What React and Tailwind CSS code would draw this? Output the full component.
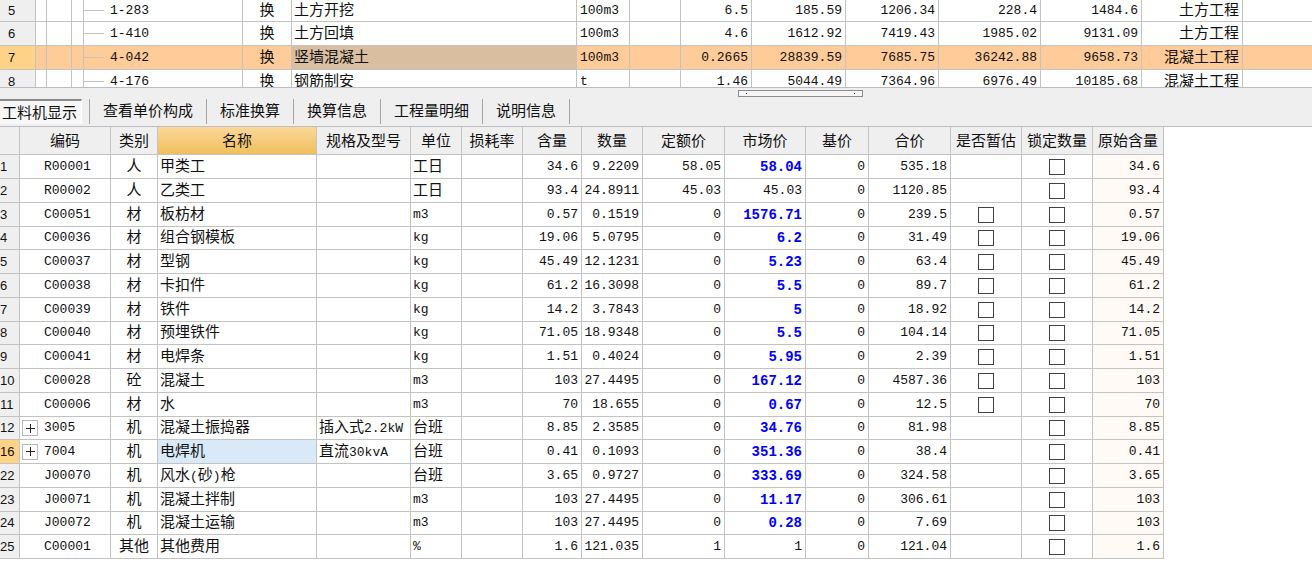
// src/pages/budget/BudgetPage.jsx
import { useState } from 'react'
import clsx from 'clsx'

const QUOTA_ROWS = [
  { no: 5, code: '1-283', name: '土方开挖',   unit: '100m3', qty: '6.5',    price: '185.59',   total: '1206.34', fullPrice: '228.4',    fullTotal: '1484.6',   kind: '土方工程' },
  { no: 6, code: '1-410', name: '土方回填',   unit: '100m3', qty: '4.6',    price: '1612.92',  total: '7419.43', fullPrice: '1985.02',  fullTotal: '9131.09',  kind: '土方工程' },
  { no: 7, code: '4-042', name: '竖墙混凝土', unit: '100m3', qty: '0.2665', price: '28839.59', total: '7685.75', fullPrice: '36242.88', fullTotal: '9658.73',  kind: '混凝土工程' },
  { no: 8, code: '4-176', name: '钢筋制安',   unit: 't',     qty: '1.46',   price: '5044.49',  total: '7364.96', fullPrice: '6976.49',  fullTotal: '10185.68', kind: '混凝土工程' },
]

const TABS = ['工料机显示', '查看单价构成', '标准换算', '换算信息', '工程量明细', '说明信息']

const HEADERS = [
  '编码', '类别', '名称', '规格及型号', '单位', '损耗率', '含量', '数量',
  '定额价', '市场价', '基价', '合价', '是否暂估', '锁定数量', '原始含量',
]

// no, code, type, name, spec, unit, content, qty, quota price, market price, total
const RESOURCES = [
  [1,  'R00001', '人',   '甲类工',       '',            '工日', '34.6',  '9.2209',  '58.05', '58.04',   '535.18'],
  [2,  'R00002', '人',   '乙类工',       '',            '工日', '93.4',  '24.8911', '45.03', '45.03',   '1120.85'],
  [3,  'C00051', '材',   '板枋材',       '',            'm3',   '0.57',  '0.1519',  '0',     '1576.71', '239.5'],
  [4,  'C00036', '材',   '组合钢模板',   '',            'kg',   '19.06', '5.0795',  '0',     '6.2',     '31.49'],
  [5,  'C00037', '材',   '型钢',         '',            'kg',   '45.49', '12.1231', '0',     '5.23',    '63.4'],
  [6,  'C00038', '材',   '卡扣件',       '',            'kg',   '61.2',  '16.3098', '0',     '5.5',     '89.7'],
  [7,  'C00039', '材',   '铁件',         '',            'kg',   '14.2',  '3.7843',  '0',     '5',       '18.92'],
  [8,  'C00040', '材',   '预埋铁件',     '',            'kg',   '71.05', '18.9348', '0',     '5.5',     '104.14'],
  [9,  'C00041', '材',   '电焊条',       '',            'kg',   '1.51',  '0.4024',  '0',     '5.95',    '2.39'],
  [10, 'C00028', '砼',   '混凝土',       '',            'm3',   '103',   '27.4495', '0',     '167.12',  '4587.36'],
  [11, 'C00006', '材',   '水',           '',            'm3',   '70',    '18.655',  '0',     '0.67',    '12.5'],
  [12, '3005',   '机',   '混凝土振捣器', '插入式2.2kW', '台班', '8.85',  '2.3585',  '0',     '34.76',   '81.98'],
  [16, '7004',   '机',   '电焊机',       '直流30kvA',   '台班', '0.41',  '0.1093',  '0',     '351.36',  '38.4'],
  [22, 'J00070', '机',   '风水(砂)枪',   '',            '台班', '3.65',  '0.9727',  '0',     '333.69',  '324.58'],
  [23, 'J00071', '机',   '混凝土拌制',   '',            'm3',   '103',   '27.4495', '0',     '11.17',   '306.61'],
  [24, 'J00072', '机',   '混凝土运输',   '',            'm3',   '103',   '27.4495', '0',     '0.28',    '7.69'],
  [25, 'C00001', '其他', '其他费用',     '',            '%',    '1.6',   '121.035', '1',     '1',       '121.04'],
]

// Latin runs are set smaller than the Chinese characters around them
function Mixed({ text }) {
  return text.split(/([\x20-\x7e]+)/).filter(Boolean).map((part, i) => (
    /^[\x20-\x7e]/.test(part)
      ? <span key={i} className="text-[13px]">{part}</span>
      : part
  ))
}

function Cell({ className, children }) {
  return (
    <td className={clsx('border-r border-b border-[#c3c3c3] leading-[18px] whitespace-nowrap', className)}>
      {children}
    </td>
  )
}

// Chinese glyphs sit high on the line, so their cells get some room above
function TextCell({ className, children }) {
  return <Cell className={clsx('pt-[2px]', className)}>{children}</Cell>
}

function NumCell({ className, children }) {
  return <Cell className={clsx('pr-[3px] text-right text-[13px]', className)}>{children}</Cell>
}

function CheckBox({ label }) {
  return (
    <input
      type="checkbox"
      aria-label={label}
      className="mx-auto block size-4 appearance-none border border-[#404040] bg-white checked:bg-[#404040]"
    />
  )
}

function QuotaTable({ selected, onSelect }) {
  return (
    <table className="w-full table-fixed border-separate border-spacing-0">
      <colgroup>
        <col className="w-[36px]" />
        <col className="w-[207px]" />
        <col className="w-[49px]" />
        <col className="w-[285px]" />
        <col className="w-[53px]" />
        <col className="w-[51px]" />
        <col className="w-[71px]" />
        <col className="w-[94px]" />
        <col className="w-[93px]" />
        <col className="w-[102px]" />
        <col className="w-[101px]" />
        <col className="w-[101px]" />
        <col />
      </colgroup>
      <tbody>
        {QUOTA_ROWS.map(r => {
          const active = r.no === selected
          return (
            <tr
              key={r.no}
              onClick={() => onSelect(r.no)}
              className={clsx('h-6 first:h-[22px]', active && 'bg-[#ffcb99]')}
            >
              <Cell className={clsx('pl-2 font-[Liberation_Sans] text-[13px]', active ? 'bg-[#ffd387]' : 'bg-[#efefef]')}>
                {r.no}
              </Cell>
              <Cell className="h-[inherit]">
                <div className="flex h-full items-stretch">
                  <span className="w-[11px] border-r border-[#c3c3c3]" />
                  <span className="w-[25px] border-r border-[#c3c3c3]" />
                  <span className="w-3 border-r border-[#c3c3c3]" />
                  <span className="h-px w-5 self-center bg-[#c3c3c3]" />
                  <span className="self-center pl-[6px] text-[13px]">{r.code}</span>
                </div>
              </Cell>
              <TextCell className="text-center">换</TextCell>
              <TextCell className={clsx('pl-[2px]', active && 'bg-[#d9bea0]')}>{r.name}</TextCell>
              <Cell className="pl-[3px] text-[13px]">{r.unit}</Cell>
              <Cell />
              <NumCell>{r.qty}</NumCell>
              <NumCell>{r.price}</NumCell>
              <NumCell>{r.total}</NumCell>
              <NumCell>{r.fullPrice}</NumCell>
              <NumCell>{r.fullTotal}</NumCell>
              <TextCell className="pr-[3px] text-right">{r.kind}</TextCell>
              <Cell className="border-r-0" />
            </tr>
          )
        })}
      </tbody>
    </table>
  )
}

function ResourceTable() {
  const [selected, setSelected] = useState(16)

  return (
    <table className="w-full table-fixed border-separate border-spacing-0">
      <colgroup>
        <col className="w-[20px]" />
        <col className="w-[91px]" />
        <col className="w-[47px]" />
        <col className="w-[159px]" />
        <col className="w-[94px]" />
        <col className="w-[51px]" />
        <col className="w-[61px]" />
        <col className="w-[59px]" />
        <col className="w-[61px]" />
        <col className="w-[82px]" />
        <col className="w-[81px]" />
        <col className="w-[63px]" />
        <col className="w-[82px]" />
        <col className="w-[71px]" />
        <col className="w-[71px]" />
        <col className="w-[71px]" />
        <col />
      </colgroup>
      <thead>
        <tr className="h-7">
          <td className="border-r border-b border-[#c3c3c3] bg-[#efefef]" />
          {HEADERS.map(h => (
            <th
              key={h}
              scope="col"
              className={clsx(
                'border-r border-b border-[#c3c3c3] pt-1 text-center leading-5 font-normal whitespace-nowrap',
                h === '名称' ? 'bg-linear-to-b from-[#fbd898] to-[#f0bf5c]' : 'bg-[#efefef]',
              )}
            >
              {h}
            </th>
          ))}
        </tr>
      </thead>
      <tbody>
        {RESOURCES.map(([no, code, type, name, spec, unit, content, qty, quota, market, total]) => {
          const active = no === selected
          const estimable = type === '材' || type === '砼'
          const adjusted = market !== quota
          return (
            <tr key={no} onClick={() => setSelected(no)} className="h-6 nth-[4n]:h-[23px]">
              <Cell className={clsx('overflow-hidden font-[Liberation_Sans] text-[13px]', active ? 'bg-[#ffd387]' : 'bg-[#efefef]')}>
                {no}
              </Cell>
              <Cell>
                <div className="flex items-center text-[13px]">
                  <span className="flex w-6 pl-[2px]">
                    {code.length === 4 && (
                      <button
                        type="button"
                        aria-label={`展开 ${code}`}
                        className="flex size-4 items-center justify-center border border-[#b8b8b8] bg-white"
                      >
                        <svg viewBox="0 0 9 9" className="size-[9px]" stroke="#222" shapeRendering="crispEdges">
                          <path d="M0 4.5h9M4.5 0v9" />
                        </svg>
                      </button>
                    )}
                  </span>
                  {code}
                </div>
              </Cell>
              <TextCell className="text-center">{type}</TextCell>
              <TextCell className={clsx('pl-[2px]', active && 'bg-[#d9e9f7]')}><Mixed text={name} /></TextCell>
              <TextCell className="pl-[2px]"><Mixed text={spec} /></TextCell>
              {/^[a-z%]/.test(unit)
                ? <Cell className="pl-[2px] text-[13px]">{unit}</Cell>
                : <TextCell className="pl-[2px]">{unit}</TextCell>}
              <Cell />
              <NumCell>{content}</NumCell>
              <NumCell>{qty}</NumCell>
              <NumCell>{quota}</NumCell>
              <Cell
                className={clsx(
                  'pr-[3px] text-right',
                  adjusted ? 'text-[14px] font-bold text-[#0000ff]' : 'text-[13px]',
                )}
              >
                {market}
              </Cell>
              <NumCell>0</NumCell>
              <NumCell>{total}</NumCell>
              <Cell>{estimable && <CheckBox label={`是否暂估 ${name}`} />}</Cell>
              <Cell><CheckBox label={`锁定数量 ${name}`} /></Cell>
              <NumCell className="bg-[#fffaf5]">{content}</NumCell>
            </tr>
          )
        })}
      </tbody>
    </table>
  )
}

export default function BudgetPage() {
  const [row, setRow] = useState(7)
  const [tab, setTab] = useState(TABS[0])

  return (
    <div className="min-h-screen overflow-hidden bg-white font-['Liberation_Mono','Noto_Sans_CJK_SC',monospace] text-[15px] text-[#111]">

      {/* ── Quota rows ── */}
      <div className="h-[87px] overflow-hidden">
        <QuotaTable selected={row} onSelect={setRow} />
      </div>

      {/* ── Tabs ── */}
      <div className="relative flex h-10 items-center border-y border-[#bcbcc2] bg-[#efefef] pt-[10px] pb-[2px]">
        {/* splitter grip */}
        <div className="absolute top-[2px] left-[738px] flex h-[7px] w-[125px] items-center justify-between border border-[#8c8c8c] bg-[#f6f6f6] px-[7px]">
          <span className="size-px bg-[#2020a0]" />
          <span className="size-px bg-[#2020a0]" />
        </div>
        {TABS.map((t, i) => (
          <div key={t} className={clsx('flex h-[25px] border-r border-[#a5a5a5]', i === 0 && 'pr-[7px]')}>
            <button
              type="button"
              onClick={() => setTab(t)}
              className={clsx(
                'h-full pt-1 leading-5 whitespace-nowrap',
                i === 0 ? 'pr-1 pl-[2px]' : 'px-[13px]',
                t === tab && 'border-t-2 border-r border-t-[#8a8a8a] border-r-white bg-[#f7f7f7]',
              )}
            >
              {t}
            </button>
          </div>
        ))}
      </div>

      {/* ── Labour, material and machine resources ── */}
      <ResourceTable />

    </div>
  )
}
